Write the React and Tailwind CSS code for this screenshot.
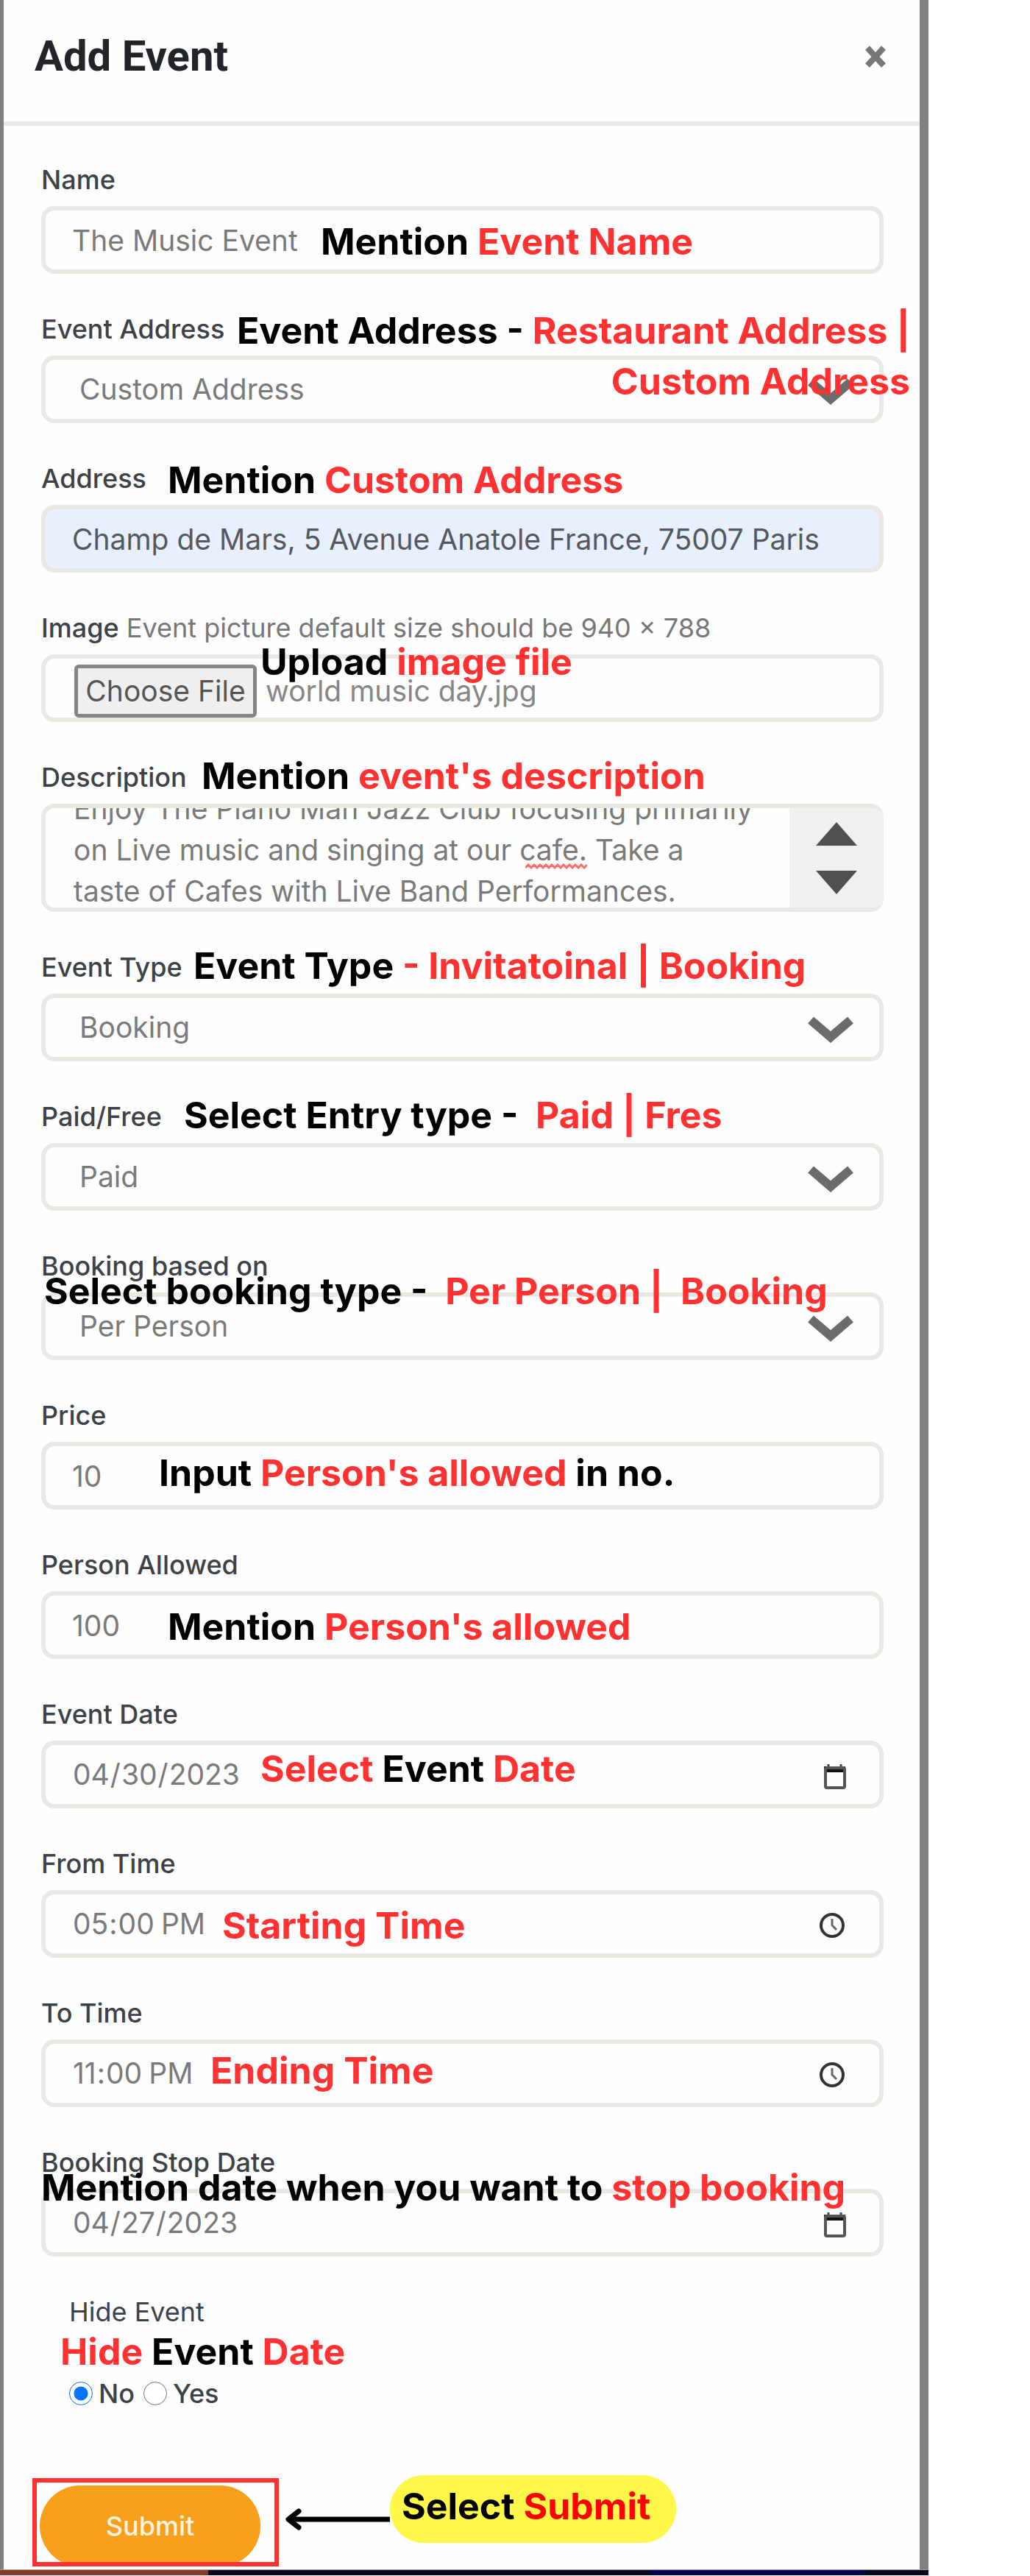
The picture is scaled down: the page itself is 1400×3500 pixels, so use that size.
import { useEffect, useRef } from "react";

const inputClass =
  "h-[92px] w-full rounded-[18px] border-[6px] border-[#ebe7e3] bg-transparent pr-8 text-[39px] text-[#7a7a7a] outline-none";

const Red = ({ children }) => <span className="text-[#ff3131]">{children}</span>;

// Guide text laid over the form
function Note({ className, children }) {
  return (
    <p className={`pointer-events-none absolute z-10 whitespace-pre text-[50px] font-bold leading-[60px] text-black ${className}`}>
      {children}
    </p>
  );
}

function Field({ id, label, hint, children }) {
  return (
    <div className="relative flex flex-col gap-3">
      <label htmlFor={id} className="text-[36px] font-medium leading-[48px] text-[#3d4148]">
        {label}
        {hint && <span className="font-normal text-[#777]"> {hint}</span>}
      </label>
      {children}
    </div>
  );
}

function SelectBox({ id, options }) {
  return (
    <div className="relative">
      <select id={id} className={`${inputClass} appearance-none pl-[46px]`}>
        {options.map((o) => (
          <option key={o}>{o}</option>
        ))}
      </select>
      <svg className="pointer-events-none absolute right-[41px] top-7 h-[40px] w-[62px]" viewBox="0 0 62 40" fill="none">
        <path d="M4 8L31 31L58 8" stroke="#6b6b6b" strokeWidth="12" />
      </svg>
    </div>
  );
}

function PickerInput({ id, type, value }) {
  return (
    <div className="relative">
      <input
        id={id}
        type={type}
        defaultValue={value}
        className={`${inputClass} pl-[36px] [&::-webkit-calendar-picker-indicator]:hidden`}
      />
      {type === "date" ? (
        <svg className="pointer-events-none absolute right-[50px] top-7 h-10 w-8" viewBox="0 0 32 40" fill="none">
          <path d="M7 4V9M24 4V9" stroke="#444" strokeWidth="3" />
          <path d="M1 7H30V15H1Z" fill="#111" />
          <rect x="3" y="9" width="26" height="27" rx="2" stroke="#555" strokeWidth="4" />
        </svg>
      ) : (
        <svg className="pointer-events-none absolute right-[52px] top-7 h-10 w-9" viewBox="0 0 36 40" fill="none">
          <circle cx="18" cy="20" r="15" stroke="#333" strokeWidth="4" />
          <path d="M18 11V20L24 26" stroke="#666" strokeWidth="3" />
        </svg>
      )}
    </div>
  );
}

function Description() {
  const ref = useRef(null);

  useEffect(() => {
    ref.current.scrollTop = 27;
  }, []);

  return (
    <div className="relative flex h-[147px] overflow-hidden rounded-[18px] border-[6px] border-r-0 border-[#ebe7e3]">
      <textarea
        id="description"
        ref={ref}
        spellCheck={false}
        className="h-full min-w-0 flex-1 resize-none overflow-hidden bg-transparent pl-[38px] text-[39px] leading-[56px] text-[#7a7a7a] outline-none"
        defaultValue={
          "Enjoy The Piano Man Jazz Club focusing primarily\non Live music and singing at our cafe. Take a\ntaste of Cafes with Live Band Performances."
        }
      />
      {/* Spelling mark under "cafe" */}
      <svg className="pointer-events-none absolute left-[652px] top-[75px] h-2 w-[84px]" viewBox="0 0 84 8" fill="none">
        <path
          d="M0 6L4 2L8 6L12 2L16 6L20 2L24 6L28 2L32 6L36 2L40 6L44 2L48 6L52 2L56 6L60 2L64 6L68 2L72 6L76 2L80 6L84 2"
          stroke="#ff6b6b"
          strokeWidth="3"
        />
      </svg>
      <div className="flex w-[128px] flex-col items-center justify-center gap-[34px] bg-[#f0f0f0]">
        <button type="button" aria-label="Scroll up">
          <svg className="block h-8 w-14" viewBox="0 0 56 32">
            <path d="M28 0L56 32H0Z" fill="#505050" />
          </svg>
        </button>
        <button type="button" aria-label="Scroll down">
          <svg className="block h-8 w-14" viewBox="0 0 56 32">
            <path d="M28 32L56 0H0Z" fill="#505050" />
          </svg>
        </button>
      </div>
    </div>
  );
}

export default function App() {
  return (
    <div className="min-h-screen bg-white font-['Inter',sans-serif]">
      <div className="w-full max-w-[1262px]">
        <div className="border-l-[5px] border-r-[12px] border-[#808080] bg-[#fefefe] pb-1">
          {/* Header */}
          <header className="flex h-[171px] items-center justify-between border-b-[6px] border-[#e9ebef] pb-3 pl-[42px] pr-11">
            <h1 className="font-['Roboto',sans-serif] text-[58px] font-bold text-[#212529]">Add Event</h1>
            <button type="button" aria-label="Close">
              <svg className="h-8 w-8" viewBox="0 0 32 32" fill="none">
                <path d="M5 4L27 28M27 4L5 28" stroke="#777" strokeWidth="8" />
              </svg>
            </button>
          </header>

          <form className="flex flex-col gap-[51px] pl-[51px] pr-[49px] pt-[49px]" onSubmit={(e) => e.preventDefault()}>
            <Field id="name" label="Name">
              <input id="name" defaultValue="The Music Event" className={`${inputClass} pl-[36px]`} />
              <Note className="left-[380px] top-[78px]">
                Mention <Red>Event Name</Red>
              </Note>
            </Field>

            <Field id="event-address" label="Event Address">
              <SelectBox id="event-address" options={["Custom Address", "Restaurant Address"]} />
              <Note className="-right-9 -top-2 text-right leading-[69px]">
                Event Address - <Red>Restaurant Address |{"\n"}Custom Address</Red>
              </Note>
            </Field>

            <Field id="address" label="Address">
              <input
                id="address"
                defaultValue="Champ de Mars, 5 Avenue Anatole France, 75007 Paris"
                className="h-[92px] w-full rounded-[18px] border-[6px] border-[#ebe7e3] bg-[#e8effd] pl-[36px] text-[39px] text-[#55585e] outline-none"
              />
              <Note className="left-[172px] -top-1">
                Mention <Red>Custom Address</Red>
              </Note>
            </Field>

            <Field id="image" label="Image" hint="Event picture default size should be 940 × 788">
              <div className="flex h-[92px] items-end gap-3 rounded-[18px] border-[6px] border-[#ebe7e3] pl-[39px] text-[39px]">
                <input id="image" type="file" className="sr-only" />
                <label htmlFor="image" className="flex h-[72px] w-[248px] items-center justify-center whitespace-nowrap rounded-[6px] border-[5px] border-[#858585] bg-[#efefef] text-[#555]">
                  Choose File
                </label>
                <span className="leading-[72px] text-[#868686]">world music day.jpg</span>
              </div>
              <Note className="left-[298px] top-10">
                Upload <Red>image file</Red>
              </Note>
            </Field>

            <Field id="description" label="Description">
              <Description />
              <Note className="left-[218px] -top-2">
                Mention <Red>event's description</Red>
              </Note>
            </Field>

            <Field id="event-type" label="Event Type">
              <SelectBox id="event-type" options={["Booking", "Invitational"]} />
              <Note className="left-[207px] -top-2">
                Event Type <Red>- Invitatoinal | Booking</Red>
              </Note>
            </Field>

            <Field id="paid" label="Paid/Free">
              <SelectBox id="paid" options={["Paid", "Free"]} />
              <Note className="left-[194px] -top-2">
                Select Entry type -  <Red>Paid | Fres</Red>
              </Note>
            </Field>

            <Field id="based-on" label="Booking based on">
              <SelectBox id="based-on" options={["Per Person", "Booking"]} />
              <Note className="left-[4px] top-7">
                Select booking type -  <Red>Per Person |  Booking</Red>
              </Note>
            </Field>

            <Field id="price" label="Price">
              <input id="price" defaultValue="10" className={`${inputClass} pl-[36px]`} />
              <Note className="left-[160px] top-[72px]">
                Input <Red>Person's allowed</Red> in no.
              </Note>
            </Field>

            <Field id="persons" label="Person Allowed">
              <input id="persons" defaultValue="100" className={`${inputClass} pl-[36px]`} />
              <Note className="left-[172px] top-[78px]">
                Mention <Red>Person's allowed</Red>
              </Note>
            </Field>

            <Field id="event-date" label="Event Date">
              <PickerInput id="event-date" type="date" value="2023-04-30" />
              <Note className="left-[298px] top-[68px]">
                <Red>Select</Red> Event <Red>Date</Red>
              </Note>
            </Field>

            <Field id="from-time" label="From Time">
              <PickerInput id="from-time" type="time" value="17:00" />
              <Note className="left-[246px] top-[78px]">
                <Red>Starting Time</Red>
              </Note>
            </Field>

            <Field id="to-time" label="To Time">
              <PickerInput id="to-time" type="time" value="23:00" />
              <Note className="left-[230px] top-[72px]">
                <Red>Ending Time</Red>
              </Note>
            </Field>

            <Field id="stop-date" label="Booking Stop Date">
              <PickerInput id="stop-date" type="date" value="2023-04-27" />
              <Note className="left-0 top-7">
                Mention date when you want to <Red>stop booking</Red>
              </Note>
            </Field>

            {/* Hide event */}
            <div role="radiogroup" aria-labelledby="hide-label" className="relative pl-[38px] text-[36px] leading-[48px] text-[#3d4148]">
              <p id="hide-label">Hide Event</p>
              <Note className="left-[26px] top-12">
                <Red>Hide</Red> Event <Red>Date</Red>
              </Note>
              <div className="flex items-center gap-2 pt-[63px]">
                <input id="hide-no" type="radio" name="hide" defaultChecked className="h-8 w-8 accent-[#0075ff]" />
                <label htmlFor="hide-no" className="pr-1 font-medium">No</label>
                <input id="hide-yes" type="radio" name="hide" className="h-8 w-8 accent-[#0075ff]" />
                <label htmlFor="hide-yes" className="font-medium">Yes</label>
              </div>
            </div>

            {/* Submit */}
            <div className="-ml-3 flex pt-10">
              <div className="h-[120px] w-[335px] overflow-hidden border-[6px] border-[#ff3131] pl-1 pt-1">
                <button type="submit" className="h-[110px] w-[300px] rounded-full bg-[#f89f1b] text-[36px] font-medium text-[#fff3e0]">
                  Submit
                </button>
              </div>
              <svg className="ml-2 mt-10 h-8 w-[143px]" viewBox="0 0 143 32" fill="none">
                <path d="M6 16H143" stroke="#000" strokeWidth="7" />
                <path d="M19 5L5 16L19 27" stroke="#000" strokeWidth="7" strokeLinecap="round" strokeLinejoin="round" />
              </svg>
              <p className="-mt-1 h-[92px] w-[389px] rounded-[46px] bg-[#fff84a] pl-4 text-[50px] font-bold leading-[84px] text-black">
                Select <span className="text-[#ff0000]">Submit</span>
              </p>
            </div>
          </form>
        </div>

        {/* Strip of the page behind the dialog */}
        <div className="flex h-2 border-t border-[#9a9a9a] bg-[#07071f]">
          <div className="w-[283px] bg-[#843c28]" />
          <div className="ml-[601px] w-[291px] bg-[#05004f]" />
        </div>
      </div>
    </div>
  );
}
